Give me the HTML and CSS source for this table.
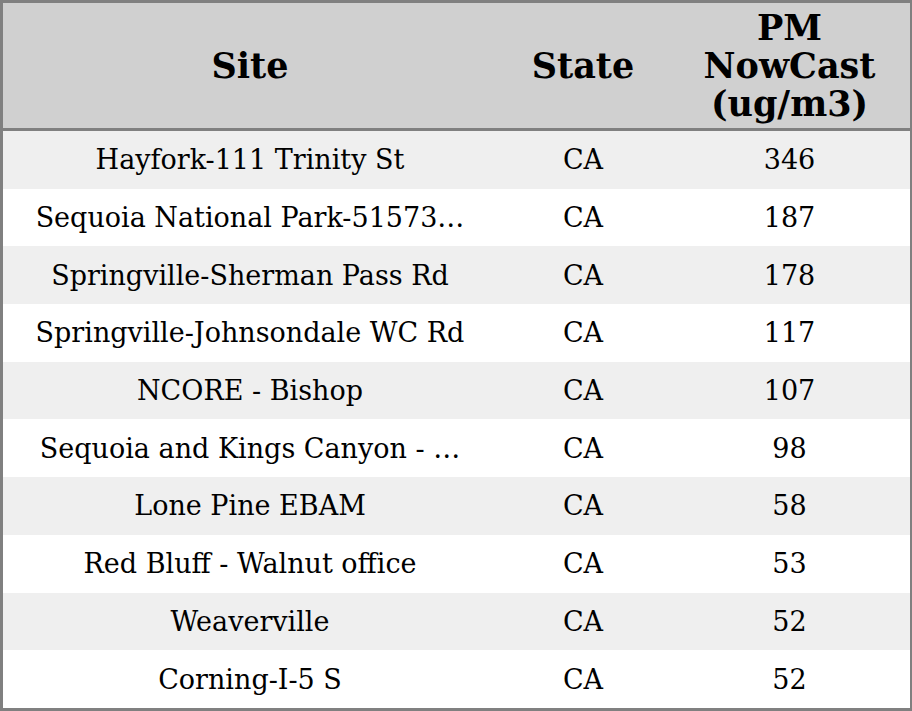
FILE: index.html
```html
<!DOCTYPE html>
<html>
<head>
<meta charset="utf-8">
<link rel="stylesheet" href="styles.css">
</head>
<body>
<table class="tbl">
  <colgroup>
    <col class="c-site">
    <col class="c-state">
    <col class="c-pm">
  </colgroup>
  <thead>
    <tr><th>Site</th><th>State</th><th>PM<br>NowCast<br>(ug/m3)</th></tr>
  </thead>
  <tbody>
    <tr><td>Hayfork-111 Trinity St</td><td>CA</td><td>346</td></tr>
    <tr><td>Sequoia National Park-51573…</td><td>CA</td><td>187</td></tr>
    <tr><td>Springville-Sherman Pass Rd</td><td>CA</td><td>178</td></tr>
    <tr><td>Springville-Johnsondale WC Rd</td><td>CA</td><td>117</td></tr>
    <tr><td>NCORE - Bishop</td><td>CA</td><td>107</td></tr>
    <tr><td>Sequoia and Kings Canyon - …</td><td>CA</td><td>98</td></tr>
    <tr><td>Lone Pine EBAM</td><td>CA</td><td>58</td></tr>
    <tr><td>Red Bluff - Walnut office</td><td>CA</td><td>53</td></tr>
    <tr><td>Weaverville</td><td>CA</td><td>52</td></tr>
    <tr><td>Corning-I-5 S</td><td>CA</td><td>52</td></tr>
  </tbody>
</table>
</body>
</html>
```
FILE: styles.css
```css
html, body {
  margin: 0;
  padding: 0;
  background: #ffffff;
}
.tbl {
  width: 912px;
  height: 711px;
  border-collapse: separate;
  border-spacing: 0;
  box-sizing: border-box;
  border-style: solid;
  border-color: #808080;
  border-width: 3px 2px 3px 3px;
  font-family: "DejaVu Serif", serif;
  color: #000;
  table-layout: fixed;
}
.c-site { width: 494px; }
.c-state { width: 172px; }
.c-pm { width: 241px; }
.tbl th {
  background: #d0d0d0;
  font-size: 35px;
  line-height: 38px;
  font-weight: bold;
  text-align: center;
  height: 128px;
  padding: 0;
  border-bottom: 3px solid #808080;
  box-sizing: border-box;
}
.tbl td {
  font-size: 27px;
  text-align: center;
  padding: 0;
  height: 57.7px;
  white-space: nowrap;
}
.tbl tbody tr:nth-child(odd) td {
  background: #efefef;
}
```
